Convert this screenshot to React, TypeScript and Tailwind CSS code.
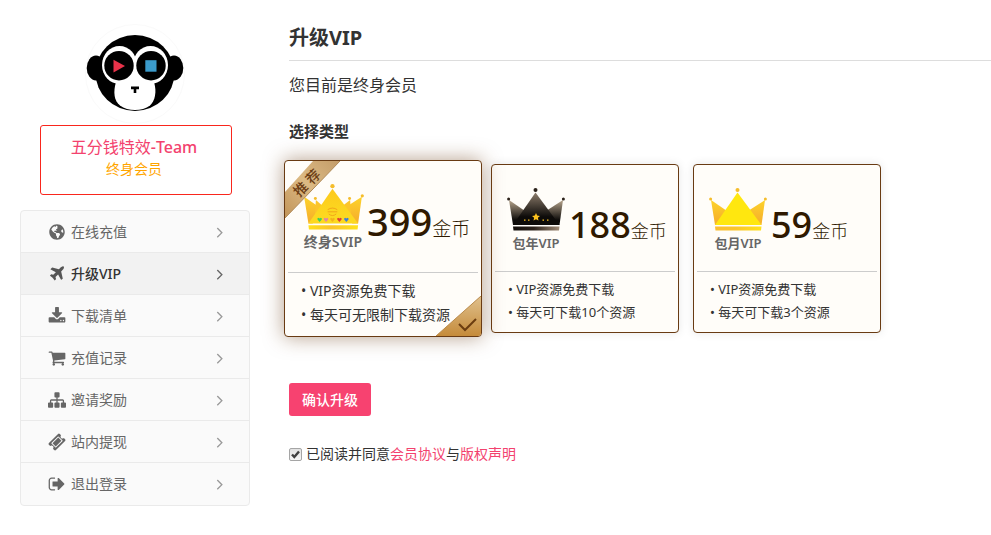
import { ReactNode, useState } from 'react'
import clsx from 'clsx'
import { FaGlobeAmericas } from 'react-icons/fa'

const ICON_PATHS = {
  plane:
    'M1568 160q44 52 12 148t-108 172l-161 161 160 696q5 19-12 33l-128 96q-7 6-19 6-4 0-7-1-15-3-21-16l-279-508-259 259 53 194q5 17-8 31l-96 96q-9 9-23 9h-2q-15-2-24-13l-189-252-252-189q-11-7-13-23-1-13 9-25l96-97q9-9 23-9 6 0 8 1l194 53 259-259-508-279q-14-8-17-24-2-16 9-27l128-128q14-13 30-8l665 159 160-160q76-76 172-108t148 12z',
  download:
    'M1344 1344q0-26-19-45t-45-19-45 19-19 45 19 45 45 19 45-19 19-45zm256 0q0-26-19-45t-45-19-45 19-19 45 19 45 45 19 45-19 19-45zm128-224v320q0 40-28 68t-68 28h-1472q-40 0-68-28t-28-68v-320q0-40 28-68t68-28h465l135 136q58 56 136 56t136-56l136-136h464q40 0 68 28t28 68zm-325-569q17 41-14 70l-448 448q-18 19-45 19t-45-19l-448-448q-31-29-14-70 17-39 59-39h256v-448q0-26 19-45t45-19h256q26 0 45 19t19 45v448h256q42 0 59 39z',
  cart:
    'M704 1536q0 52-38 90t-90 38-90-38-38-90 38-90 90-38 90 38 38 90zm896 0q0 52-38 90t-90 38-90-38-38-90 38-90 90-38 90 38 38 90zm128-1088v512q0 24-16.5 42.5t-40.5 21.5l-1044 122q13 60 13 70 0 16-24 64h920q26 0 45 19t19 45-19 45-45 19h-1024q-26 0-45-19t-19-45q0-11 8-31.5t16-36 21.5-40 15.5-29.5l-177-823h-204q-26 0-45-19t-19-45 19-45 45-19h256q16 0 28.5 6.5t19.5 15.5 13 24.5 8 26 5.5 29.5 4.5 26h1201q26 0 45 19t19 45z',
  sitemap:
    'M1792 1248v320q0 40-28 68t-68 28h-320q-40 0-68-28t-28-68v-320q0-40 28-68t68-28h96v-192h-512v192h96q40 0 68 28t28 68v320q0 40-28 68t-68 28h-320q-40 0-68-28t-28-68v-320q0-40 28-68t68-28h96v-192h-512v192h96q40 0 68 28t28 68v320q0 40-28 68t-68 28h-320q-40 0-68-28t-28-68v-320q0-40 28-68t68-28h96v-192q0-52 38-90t90-38h512v-192h-96q-40 0-68-28t-28-68v-320q0-40 28-68t68-28h320q40 0 68 28t28 68v320q0 40-28 68t-68 28h-96v192h512q52 0 90 38t38 90v192h96q40 0 68 28t28 68z',
  ticket:
    'M1024 452l316 316-572 572-316-316zm-211 979l618-618q19-19 19-45t-19-45l-362-362q-18-18-45-18t-45 18l-618 618q-19 19-19 45t19 45l362 362q18 18 45 18t45-18zm889-637l-907 908q-37 37-90.5 37t-90.5-37l-126-126q56-56 56-136t-56-136-136-56-136 56l-125-126q-37-37-37-90.5t37-90.5l907-906q37-37 90.5-37t90.5 37l125 125q-56 56-56 136t56 136 136 56 136-56l126 125q37 37 37 90.5t-37 90.5z',
  signOut:
    'M704 1440q0 4 1 20t.5 26.5-3 23.5-10 19.5-20.5 6.5h-320q-119 0-203.5-84.5t-84.5-203.5v-704q0-119 84.5-203.5t203.5-84.5h320q13 0 22.5 9.5t9.5 22.5q0 4 1 20t.5 26.5-3 23.5-10 19.5-20.5 6.5h-320q-66 0-113 47t-47 113v704q0 66 47 113t113 47h312l11.5 1 11.5 3 8 5.5 7 9 2 13.5zm928-544q0 26-19 45l-544 544q-19 19-45 19t-45-19-19-45v-288h-448q-26 0-45-19t-19-45v-384q0-26 19-45t45-19h448v-288q0-26 19-45t45-19 45 19l544 544q19 19 19 45z',
  angleRight:
    'M1171 960q0 13-10 23l-466 466q-10 10-23 10t-23-10l-50-50q-10-10-10-23t10-23l393-393-393-393q-10-10-10-23t10-23l50-50q10-10 23-10t23 10l466 466q10 10 10 23z'
}

function Icon({ name, className }: { name: keyof typeof ICON_PATHS; className?: string }) {
  return (
    <svg viewBox="0 0 1792 1792" fill="currentColor" className={className} aria-hidden="true">
      <path d={ICON_PATHS[name]} />
    </svg>
  )
}

const menu: { label: string; icon: ReactNode; active?: boolean }[] = [
  { label: '在线充值', icon: <FaGlobeAmericas className="w-4 h-4" /> },
  { label: '升级VIP', icon: <Icon name="plane" className="w-[18px] h-[18px]" />, active: true },
  { label: '下载清单', icon: <Icon name="download" className="w-[18px] h-[18px]" /> },
  { label: '充值记录', icon: <Icon name="cart" className="w-[18px] h-[18px]" /> },
  { label: '邀请奖励', icon: <Icon name="sitemap" className="w-[18px] h-[18px]" /> },
  { label: '站内提现', icon: <Icon name="ticket" className="w-[18px] h-[18px]" /> },
  { label: '退出登录', icon: <Icon name="signOut" className="w-[18px] h-[18px]" /> }
]

type CrownKind = 'rainbow' | 'black' | 'gold'

interface Plan {
  id: string
  name: string
  price: number
  crown: CrownKind
  perks: string[]
}

const plans: Plan[] = [
  { id: 'life', name: '终身SVIP', price: 399, crown: 'rainbow', perks: ['VIP资源免费下载', '每天可无限制下载资源'] },
  { id: 'year', name: '包年VIP', price: 188, crown: 'black', perks: ['VIP资源免费下载', '每天可下载10个资源'] },
  { id: 'month', name: '包月VIP', price: 59, crown: 'gold', perks: ['VIP资源免费下载', '每天可下载3个资源'] }
]

function Avatar() {
  return (
    <svg viewBox="0 0 100 100" className="w-[100px] h-[100px]" role="img" aria-label="五分钱特效">
      <circle cx="50" cy="50" r="49.5" fill="#fff" stroke="#fafafa" />
      <ellipse cx="11" cy="44" rx="9.3" ry="12.5" />
      <ellipse cx="89" cy="44" rx="9.3" ry="12.5" />
      <ellipse cx="50" cy="49" rx="39.5" ry="38" />
      <g fill="#fff">
        <ellipse cx="34.5" cy="41" rx="17.5" ry="19" />
        <ellipse cx="65.5" cy="41" rx="17.5" ry="19" />
        <path d="M42 36H58L69 58C72 68 70 77 65 81.5C57 87.5 43 87.5 35 81.5C29 77 28 68 31 58Z" />
      </g>
      <circle cx="34" cy="41.7" r="14.7" />
      <circle cx="66" cy="41.7" r="14.7" />
      <path d="M28.5 35.8L40 42L28.5 48.5Z" fill="#e8334a" />
      <rect x="60.3" y="36.2" width="11.2" height="11.5" fill="#3b9bcb" />
      <path d="M46 62.5H54V65.3H51.3V69H48.7V65.3H46Z" />
    </svg>
  )
}

const HEARTS = [
  { x: 19, color: '#3fd255' },
  { x: 25, color: '#e087a5' },
  { x: 31, color: '#f3b21b' },
  { x: 37.5, color: '#e33e35' },
  { x: 44, color: '#3f7fd6' }
]

function Crown({ kind, className }: { kind: CrownKind; className?: string }) {
  const black = kind === 'black'
  const rainbow = kind === 'rainbow'
  const ball = black ? '#2b211a' : '#f5bd2c'
  return (
    <svg viewBox="0 0 58 43" className={className} aria-hidden="true">
      <defs>
        <linearGradient id={`side-${kind}`} x1="0" y1="0" x2="0" y2="1">
          <stop offset="0" stopColor={black ? '#b8a68e' : '#fdd32b'} />
          <stop offset="0.8" stopColor={black ? '#0d0b09' : '#f7b32b'} />
        </linearGradient>
        <linearGradient id={`front-${kind}`} x1="0" y1="0" x2="0" y2="1">
          <stop offset="0" stopColor={black ? '#8c7c6b' : rainbow ? '#fdc91c' : '#ffe70f'} />
          <stop offset="0.75" stopColor={black ? '#0d0b09' : rainbow ? '#fcd820' : '#ffe70f'} />
        </linearGradient>
        <linearGradient id={`base-${kind}`}>
          <stop offset="0" stopColor={black ? '#120e0b' : rainbow ? '#ffe01a' : '#fbbd31'} />
          <stop offset="0.45" stopColor={black ? '#2b211a' : '#fbc52a'} />
          <stop offset="1" stopColor={black ? '#a08b76' : '#ffe21a'} />
        </linearGradient>
      </defs>
      <path d="M2 12L18 23L10 37H6Z" fill={`url(#side-${kind})`} />
      <path d="M56 12L39 23L47 37H52.5Z" fill={`url(#side-${kind})`} />
      {rainbow && (
        <>
          <path d="M13 15L21 22L12 31Z" fill="#fbc52a" />
          <path d="M45 15L36 22L46 31Z" fill="#fbc52a" />
          <circle cx="12.5" cy="13.5" r="1.4" fill={ball} />
          <circle cx="44.5" cy="13.5" r="1.4" fill={ball} />
        </>
      )}
      <path d="M28.5 4.5L52.5 37H6Z" fill={`url(#front-${kind})`} />
      <path d="M6 38.5H52.5L52 42.5H6.5Z" fill={`url(#base-${kind})`} />
      <circle cx="28.5" cy="2" r="2" fill={ball} />
      <circle cx="1.6" cy="11" r="1.5" fill={ball} />
      <circle cx="56.4" cy="11" r="1.5" fill={ball} />
      {rainbow && (
        <>
          <path d="M24 24Q28.5 21 33 24M24 26H33M25 28Q28.5 31 32 28" fill="none" stroke="#ee9d18" strokeWidth="0.8" />
          {HEARTS.map(h => (
            <path
              key={h.x}
              d={`M${h.x - 2.5} 35.5l-2-2.2q-.6-1.5.8-1.8l1.2.7 1.2-.7q1.4.3.8 1.8z`}
              fill={h.color}
            />
          ))}
        </>
      )}
      {black && (
        <g fill="#fbc11e">
          <path d="M29 25l1.2 2.6 2.8.3-2.1 1.9.6 2.8-2.5-1.4-2.5 1.4.6-2.8-2.1-1.9 2.8-.3z" />
          <path d="M17 31.5h1.5v1.2H17zM21 31.5h1.5v1.2H21zM35.5 31.5H37v1.2h-1.5zM40 31.5h1.5v1.2H40z" />
        </g>
      )}
    </svg>
  )
}

interface PlanCardProps {
  plan: Plan
  selected: boolean
  recommended: boolean
  onSelect: () => void
}

function PlanCard({ plan, selected, recommended, onSelect }: PlanCardProps) {
  return (
    <label
      className={clsx(
        'relative block shrink-0 overflow-hidden rounded border border-[#693b13] bg-[#fffdf9] cursor-pointer',
        selected
          ? 'z-10 -mx-[5px] -my-1 w-[198px] shadow-[0_0_20px_rgba(105,59,19,0.5)]'
          : 'w-[188px] shadow-[0_0_10px_rgba(0,0,0,0.1)]'
      )}
    >
      <input type="radio" name="plan" value={plan.id} checked={selected} onChange={onSelect} className="sr-only" />
      <div className={clsx('flex', selected ? 'h-[111px] pl-4 pt-[23px]' : 'h-[106px] pl-[15px] pt-[23px]')}>
        <div className={clsx('flex shrink-0 flex-col items-center', selected ? 'w-16' : 'w-[58px]')}>
          <Crown kind={plan.crown} className={selected ? 'w-[62px] h-[46px]' : 'w-[58px] h-[43px]'} />
          <span
            className={clsx(
              'font-semibold leading-6 text-[#666] whitespace-nowrap',
              selected ? 'text-sm' : 'text-[13px]'
            )}
          >
            {plan.name}
          </span>
        </div>
        <div className={clsx('flex items-baseline text-[#2f1900] whitespace-nowrap', selected ? 'pl-0.5' : 'pl-1')}>
          <span className={clsx('font-medium leading-[74px]', selected ? 'text-[38px]' : 'text-[36px]')}>
            {plan.price}
          </span>
          <span className={clsx('font-light', selected ? 'text-[19px]' : 'text-lg')}>金币</span>
        </div>
      </div>
      <ul
        className={clsx(
          'mx-[3px] border-t border-[#ccc] pt-1.5 pl-[13px] text-[#333] whitespace-nowrap',
          selected ? 'pb-[9px] text-sm leading-6' : 'pb-2 text-[13px] leading-[23px]'
        )}
      >
        {plan.perks.map(perk => (
          <li key={perk}>• {perk}</li>
        ))}
      </ul>

      {/* Recommended ribbon */}
      {recommended && (
        <div className="absolute top-0 left-0 w-[56px] h-[58px]">
          <svg viewBox="0 0 56 58" className="w-full h-full" aria-hidden="true">
            <defs>
              <linearGradient id="ribbon" x1="0" y1="1" x2="1" y2="0">
                <stop offset="0" stopColor="#c19459" />
                <stop offset="0.5" stopColor="#dcba84" />
                <stop offset="1" stopColor="#c39c69" />
              </linearGradient>
            </defs>
            <path d="M0 31L28 0H55L0 57Z" fill="url(#ribbon)" />
            <path d="M55 0L0 57" stroke="#b08a58" />
          </svg>
          <span className="absolute top-3 left-0 w-[44px] -rotate-45 text-center text-sm leading-5 font-medium text-[#6b3d14]">
            推 荐
          </span>
        </div>
      )}

      {/* Selected corner */}
      {selected && (
        <svg viewBox="0 0 45 40" className="absolute right-0 bottom-0 w-[45px] h-10" aria-hidden="true">
          <defs>
            <linearGradient id="corner" x1="0" y1="0" x2="0" y2="1">
              <stop offset="0" stopColor="#e0c18e" />
              <stop offset="1" stopColor="#c58b3a" />
            </linearGradient>
          </defs>
          <path d="M45 0V40H0Z" fill="url(#corner)" />
          <path d="M45 0L0 40" stroke="#b98a4b" />
          <path d="M23 28L29 34L40 23" fill="none" stroke="#6b3d10" strokeWidth="2" />
        </svg>
      )}
    </label>
  )
}

export default function App() {
  const [selected, setSelected] = useState('life')
  const [agreed, setAgreed] = useState(true)

  return (
    <div className="flex bg-white pl-5 text-sm text-[#333] font-['Noto_Sans','Noto_Sans_CJK_SC',sans-serif]">
      <aside className="w-[230px] shrink-0 pt-6">
        <div className="flex justify-center">
          <Avatar />
        </div>
        <div className="mx-5 mt-px h-[70px] w-[192px] rounded-[3px] border border-[#f9261d] pt-[9px] pr-1 text-center">
          <p className="text-base leading-6 text-[#f3426e]">
            五分钱特效<span className="font-medium">-Team</span>
          </p>
          <p className="leading-5 text-[#ffa500]">终身会员</p>
        </div>
        <nav className="mt-[15px] rounded-sm border border-[#eaeaea] bg-[#fafafa]">
          {menu.map(item => (
            <a
              key={item.label}
              href="#"
              className={clsx(
                'flex h-[42px] items-center border-b border-[#eaeaea] pl-[27px] pr-5 last:border-b-0',
                item.active ? 'bg-[#f2f2f2] font-medium text-[#333]' : 'text-[#666]'
              )}
            >
              <span className={clsx('flex w-[18px] justify-center', item.active && 'text-[#555]')}>{item.icon}</span>
              <span className="ml-[5px] flex-1">{item.label}</span>
              <Icon name="angleRight" className={clsx('w-[18px] h-[18px]', item.active ? 'text-[#666]' : 'text-[#999]')} />
            </a>
          ))}
        </nav>
      </aside>

      <main className="ml-[39px] min-w-0 flex-1 pt-[22px]">
        <h1 className="border-b border-[#ddd] pb-1.5 text-xl leading-8 font-bold">升级VIP</h1>
        <p className="mt-3 text-base leading-6">您目前是终身会员</p>
        <h2 className="mt-[22px] text-[15px] leading-6 font-semibold">选择类型</h2>
        <div className="mt-[21px] flex gap-3.5">
          {plans.map(plan => (
            <PlanCard
              key={plan.id}
              plan={plan}
              selected={plan.id === selected}
              recommended={plan.id === 'life'}
              onSelect={() => setSelected(plan.id)}
            />
          ))}
        </div>
        <button type="button" className="mt-[50px] h-[33px] w-[82px] rounded-[3px] bg-[#f74270] font-medium text-white">
          确认升级
        </button>
        <div className="mt-7 flex items-center leading-5">
          <span className="relative mr-1 flex h-[13px] w-[13px]">
            <input
              id="agree"
              type="checkbox"
              checked={agreed}
              onChange={e => setAgreed(e.target.checked)}
              className="h-[13px] w-[13px] appearance-none rounded-xs border border-[#a5a5a5] bg-linear-to-b from-[#e2e2e2] to-[#f6f6f6]"
            />
            {agreed && (
              <svg viewBox="0 0 13 13" className="pointer-events-none absolute inset-0" aria-hidden="true">
                <path d="M3 6.5L5.3 9L10 3.5" fill="none" stroke="#404040" strokeWidth="2.4" />
              </svg>
            )}
          </span>
          <label htmlFor="agree">已阅读并同意</label>
          <a href="#" className="text-[#f3426e]">会员协议</a>
          <span>与</span>
          <a href="#" className="text-[#f3426e]">版权声明</a>
        </div>
      </main>
    </div>
  )
}
